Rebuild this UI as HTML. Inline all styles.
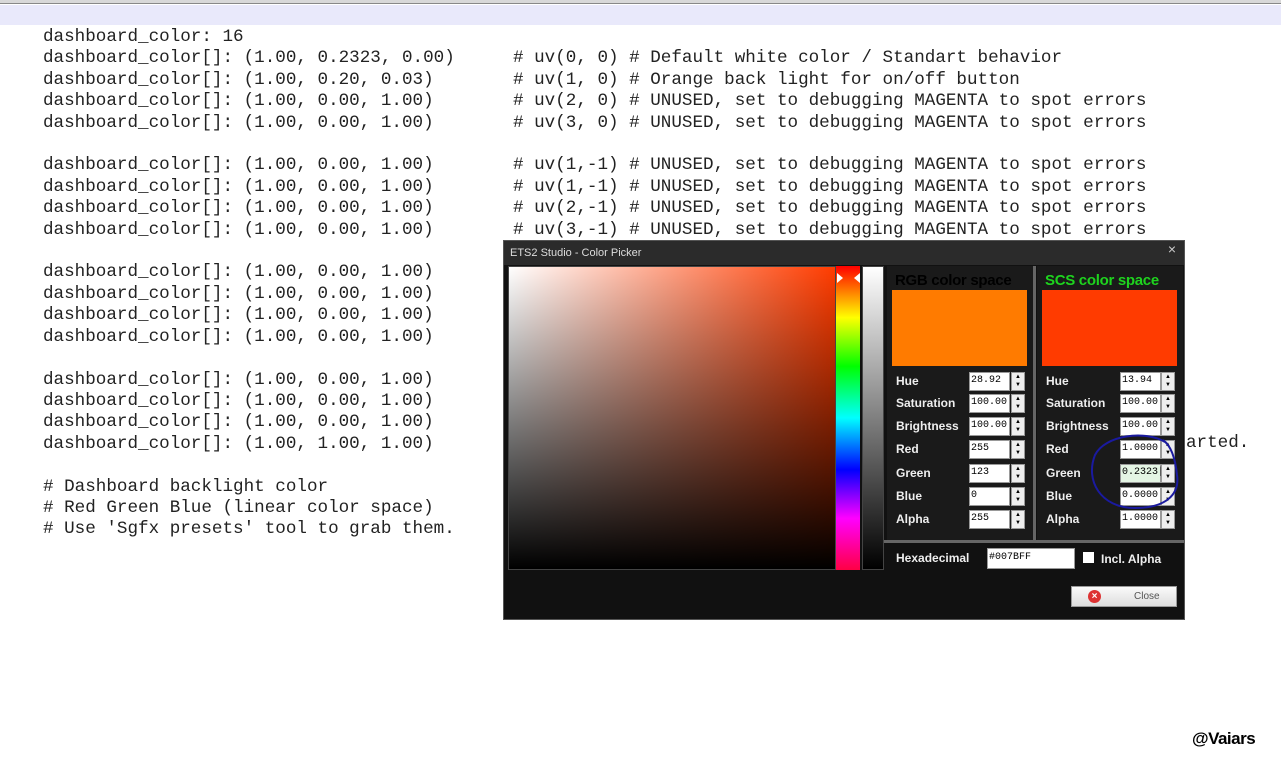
<!DOCTYPE html>
<html><head><meta charset="utf-8"><style>
body{margin:0;width:1281px;height:760px;background:#fff;position:relative;overflow:hidden;font-family:"Liberation Sans",sans-serif}
.top{position:absolute;left:0;top:0;width:1281px;height:3px;background:#d8d8d8;border-bottom:1px solid #888}
.band{position:absolute;left:0;top:5px;width:1281px;height:20px;background:#e9e9fb}
pre{position:absolute;margin:0;font-family:"Liberation Mono",monospace;font-size:17.6px;line-height:21.4px;color:#222;top:27px}
.dlg{position:absolute;left:503px;top:240px;width:682px;height:380px;background:#111;border:1px solid #555;box-sizing:border-box}
.title{position:absolute;left:0;top:0;width:100%;height:24px;background:#2b2b2b;color:#ddd;font-size:11px;line-height:24px;padding-left:6px;box-sizing:border-box}
.x{position:absolute;right:8px;top:0;color:#ccc;font-size:14px}
.sv{position:absolute;left:508px;top:266px;width:328px;height:304px;background:linear-gradient(to bottom,rgba(0,0,0,0),#000),linear-gradient(to right,#fff,#ff3c00);border:1px solid #444;box-sizing:border-box}
.hue{position:absolute;left:836px;top:266px;width:24px;height:304px;background:linear-gradient(to bottom,#f00 0%,#ff0 17%,#0f0 33%,#0ff 50%,#00f 67%,#f0f 83%,#f04 100%)}
.bri{position:absolute;left:862px;top:266px;width:22px;height:304px;background:linear-gradient(#fff,#000);border:1px solid #444;box-sizing:border-box}
.pan{position:absolute;top:266px;width:146px;height:274px;background:#1a1a1a}
.sep{position:absolute;background:#666}
.hd{position:absolute;top:272px;font-size:15px;font-weight:bold;letter-spacing:-0.3px}
.sw{position:absolute;top:290px;width:135px;height:76px}
.lb{position:absolute;color:#eee;font-weight:bold;font-size:12px}
.in{position:absolute;width:41px;height:19px;background:#fff;border:1px solid #999;box-sizing:border-box;font-family:"Liberation Mono",monospace;font-size:10px;line-height:16px;padding-left:1px;color:#000}
.sp{position:absolute;width:14px;height:19px;background:#eee;border:1px solid #999;box-sizing:border-box;font-size:6px;line-height:8px;text-align:center;color:#000}
</style></head><body>
<div class="top"></div><div class="band"></div>
<pre style="left:43px">dashboard_color: 16
dashboard_color[]: (1.00, 0.2323, 0.00)
dashboard_color[]: (1.00, 0.20, 0.03)
dashboard_color[]: (1.00, 0.00, 1.00)
dashboard_color[]: (1.00, 0.00, 1.00)

dashboard_color[]: (1.00, 0.00, 1.00)
dashboard_color[]: (1.00, 0.00, 1.00)
dashboard_color[]: (1.00, 0.00, 1.00)
dashboard_color[]: (1.00, 0.00, 1.00)

dashboard_color[]: (1.00, 0.00, 1.00)
dashboard_color[]: (1.00, 0.00, 1.00)
dashboard_color[]: (1.00, 0.00, 1.00)
dashboard_color[]: (1.00, 0.00, 1.00)

dashboard_color[]: (1.00, 0.00, 1.00)
dashboard_color[]: (1.00, 0.00, 1.00)
dashboard_color[]: (1.00, 0.00, 1.00)
dashboard_color[]: (1.00, 1.00, 1.00)

# Dashboard backlight color
# Red Green Blue (linear color space)
# Use 'Sgfx presets' tool to grab them.</pre>
<pre style="left:513px;top:48.4px"># uv(0, 0) # Default white color / Standart behavior
# uv(1, 0) # Orange back light for on/off button
# uv(2, 0) # UNUSED, set to debugging MAGENTA to spot errors
# uv(3, 0) # UNUSED, set to debugging MAGENTA to spot errors

# uv(1,-1) # UNUSED, set to debugging MAGENTA to spot errors
# uv(1,-1) # UNUSED, set to debugging MAGENTA to spot errors
# uv(2,-1) # UNUSED, set to debugging MAGENTA to spot errors
# uv(3,-1) # UNUSED, set to debugging MAGENTA to spot errors</pre>
<pre style="left:1186px;top:433px">arted.</pre>

<div class="dlg"><div class="title">ETS2 Studio - Color Picker</div><div class="x">×</div></div>
<div class="sv"></div><div class="hue"></div><div class="bri"></div>
<div style="position:absolute;left:837px;top:273px;width:0;height:0;border:5px solid transparent;border-left:6px solid #fff"></div>
<div style="position:absolute;left:849px;top:273px;width:0;height:0;border:5px solid transparent;border-right:6px solid #fff"></div>
<div class="pan" style="left:887px"></div><div class="pan" style="left:1037px"></div>
<div class="sep" style="left:1033px;top:266px;width:3px;height:276px"></div>
<div class="sep" style="left:884px;top:540px;width:300px;height:3px"></div>
<div class="hd" style="left:895px;color:#000">RGB color space</div>
<div class="hd" style="left:1045px;color:#1ed31e">SCS color space</div>
<div class="sw" style="left:892px;background:#ff7b00"></div>
<div class="sw" style="left:1042px;background:#ff3b00"></div>

<div class="lb" style="left:896px;top:374px">Hue</div><div class="in" style="left:969px;top:372px">28.92</div><div class="sp" style="left:1011px;top:372px">▲<br>▼</div>
<div class="lb" style="left:896px;top:396px">Saturation</div><div class="in" style="left:969px;top:394px">100.00</div><div class="sp" style="left:1011px;top:394px">▲<br>▼</div>
<div class="lb" style="left:896px;top:419px">Brightness</div><div class="in" style="left:969px;top:417px">100.00</div><div class="sp" style="left:1011px;top:417px">▲<br>▼</div>
<div class="lb" style="left:896px;top:442px">Red</div><div class="in" style="left:969px;top:440px">255</div><div class="sp" style="left:1011px;top:440px">▲<br>▼</div>
<div class="lb" style="left:896px;top:466px">Green</div><div class="in" style="left:969px;top:464px">123</div><div class="sp" style="left:1011px;top:464px">▲<br>▼</div>
<div class="lb" style="left:896px;top:489px">Blue</div><div class="in" style="left:969px;top:487px">0</div><div class="sp" style="left:1011px;top:487px">▲<br>▼</div>
<div class="lb" style="left:896px;top:512px">Alpha</div><div class="in" style="left:969px;top:510px">255</div><div class="sp" style="left:1011px;top:510px">▲<br>▼</div>

<div class="lb" style="left:1046px;top:374px">Hue</div><div class="in" style="left:1120px;top:372px">13.94</div><div class="sp" style="left:1161px;top:372px">▲<br>▼</div>
<div class="lb" style="left:1046px;top:396px">Saturation</div><div class="in" style="left:1120px;top:394px">100.00</div><div class="sp" style="left:1161px;top:394px">▲<br>▼</div>
<div class="lb" style="left:1046px;top:419px">Brightness</div><div class="in" style="left:1120px;top:417px">100.00</div><div class="sp" style="left:1161px;top:417px">▲<br>▼</div>
<div class="lb" style="left:1046px;top:442px">Red</div><div class="in" style="left:1120px;top:440px">1.0000</div><div class="sp" style="left:1161px;top:440px">▲<br>▼</div>
<div class="lb" style="left:1046px;top:466px">Green</div><div class="in" style="left:1120px;top:464px;background:#e4f5e4">0.2323|</div><div class="sp" style="left:1161px;top:464px">▲<br>▼</div>
<div class="lb" style="left:1046px;top:489px">Blue</div><div class="in" style="left:1120px;top:487px">0.0000</div><div class="sp" style="left:1161px;top:487px">▲<br>▼</div>
<div class="lb" style="left:1046px;top:512px">Alpha</div><div class="in" style="left:1120px;top:510px">1.0000</div><div class="sp" style="left:1161px;top:510px">▲<br>▼</div>

<svg style="position:absolute;left:1085px;top:430px" width="100" height="85"><path d="M80 12 C60 0 20 5 10 25 C0 50 15 78 50 78 C80 78 95 65 92 45 C90 25 85 15 78 10" fill="none" stroke="#1a1aa0" stroke-width="2"/></svg>

<div class="lb" style="left:896px;top:551px">Hexadecimal</div>
<div class="in" style="left:987px;top:548px;width:88px;height:21px;line-height:18px">#007BFF</div>
<div style="position:absolute;left:1083px;top:552px;width:11px;height:11px;background:#fff"></div>
<div class="lb" style="left:1101px;top:552px">Incl. Alpha</div>
<div style="position:absolute;left:1071px;top:586px;width:106px;height:21px;background:linear-gradient(#fafafa,#ddd);border:1px solid #999;box-sizing:border-box;font-size:10px;color:#555;line-height:19px"><span style="position:absolute;left:16px;top:3px;width:13px;height:13px;border-radius:50%;background:#d33;color:#fff;font-size:10px;line-height:13px;text-align:center;font-weight:bold">×</span><span style="position:absolute;left:62px">Close</span></div>

<div style="position:absolute;left:1192px;top:729px;font-size:17px;font-weight:bold;color:#000;letter-spacing:-0.5px">@Vaiars</div>
</body></html>
